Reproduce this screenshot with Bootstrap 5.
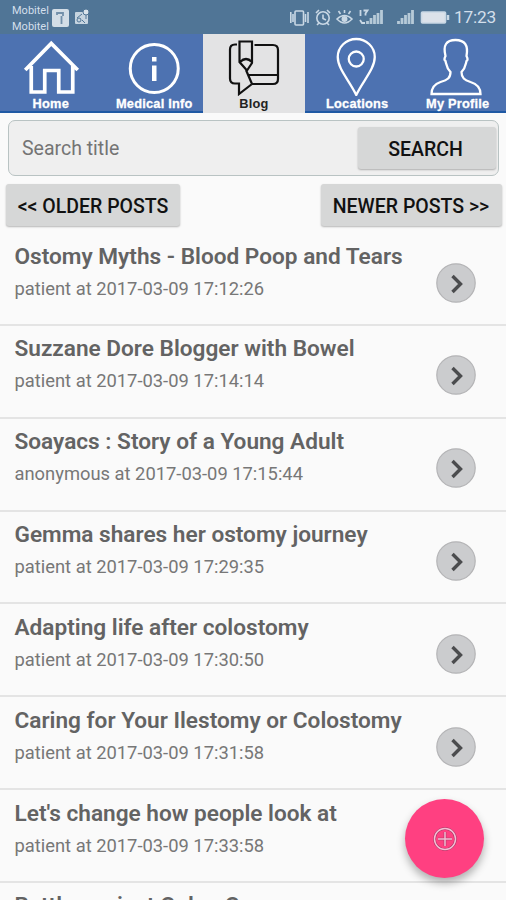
<!DOCTYPE html>
<html lang="en">
<head>
<meta charset="utf-8">
<meta name="viewport" content="width=device-width, initial-scale=1">
<title>Blog</title>
<link href="https://cdn.jsdelivr.net/npm/bootstrap@5.3.0/dist/css/bootstrap.min.css" rel="stylesheet">
<style>
body{font-family:Roboto,"Liberation Sans",sans-serif;background:#fafafa;height:900px;color:#666}
.screen{width:506px;height:900px}
.statusbar{height:34px;background:#507596;color:#d3dfeb}
.carrier{font-size:11px;line-height:15.5px;padding:3px 0 0 12px;width:51px;white-space:nowrap}
.clock{font-size:17.3px;line-height:35px;width:52px;letter-spacing:-.2px;white-space:nowrap}
.tabs{height:79px}
.tab{width:100.5px;height:79px;background:#4d72b1;color:#fff;border-bottom:2px solid #1f59a4;font:bold 12.8px/15px "Liberation Sans",Arial,sans-serif;letter-spacing:.22px;text-decoration:none}
.tab-wide{width:101.5px}
.tab.active{width:102px;background:#e3e3e4;color:#222;border-bottom-color:#e3e3e4}
.tab svg{height:62px;width:100px}
.tab span{-webkit-text-stroke:.3px;white-space:nowrap}
.tab.active span{-webkit-text-stroke:0}
.searchbox{height:56px;margin:7px 7px 0 8px;border:1.5px solid #b9c3c3;border-radius:7px;background:#efefef}
.searchbox .form-control{font-size:19.5px;color:#707070;padding:1px 0 0 13px}
.searchbox .form-control::placeholder{color:#747474}
.key{background:#d6d7d7;color:#111;font-weight:500;font-size:19.5px;line-height:41px;height:42px;border:0;border-radius:3px;padding:2px 0 0;box-shadow:0 1px 2px rgba(0,0,0,.28);white-space:nowrap}
.key-search{width:138px;margin-right:2px;padding-right:3px}
.key-older{width:174px;margin-left:2px}
.key-newer{width:181px;padding-right:1px}
.posts{padding-top:7px}
.post{height:92.85px;border-bottom:2px solid #e4e4e4;padding:5.5px 30px 0 14.5px}
.post h2{font-size:22.62px;line-height:28px;font-weight:600;color:#636363;white-space:nowrap}
.post p{font-size:18.35px;line-height:24px;color:#777;margin-top:2px;white-space:nowrap}
.go{width:40px;height:40px}
.fab{left:405px;top:799px;width:79px;height:79px;background:#ff4081;box-shadow:0 5px 9px rgba(0,0,0,.3)}
</style>
</head>
<body>
<svg class="d-none"><symbol id="chevron" viewBox="0 0 40 40"><circle cx="20" cy="20" r="19.2" fill="#cbccce" stroke="#b4b4b6" stroke-width="1.2"/><path d="M16.5 13 24.5 21 16.5 29" fill="none" stroke="#4b4c4e" stroke-width="3.4"/></symbol></svg>
<div class="screen position-relative overflow-hidden">
<header class="statusbar d-flex align-items-start">
  <div class="carrier">Mobitel<br>Mobitel</div>
  <svg width="40" height="34" viewBox="51 0 40 34"><rect x="52" y="9" width="17" height="18" rx="2" fill="#d3dde6"/><path d="M57 15v-2h6v3M61.500 16v8" fill="none" stroke="#7390aa" stroke-width="1.800"/><rect x="75" y="12" width="13" height="12" rx="1" fill="#c6d4e0"/><circle cx="86" cy="12" r="3" fill="#d9e3eb" stroke="#507596"/><path d="M86 15v4M82 14l-5 4m8 5-3-3" stroke="#507596" fill="none"/><circle cx="79" cy="20" r="2" fill="none" stroke="#507596"/></svg>
  <svg class="ms-auto" width="164" height="34" viewBox="290 0 164 34" fill="none" stroke="#c9d8e5" stroke-width="1.600"><rect x="295" y="11" width="8.500" height="14" rx="1"/><path d="M290.800 12v11M293 14v8M305.500 14v8M308 12v11"/><circle cx="323" cy="18" r="6.200"/><path d="M323 14.500v4l3 1.500M316 13l3-3m11 3-3-3M317 25l2-2m10 2-2-2"/><path d="M337 19q7.500-7 15 0-7.500 8-15 0zM344.500 13v-3m-4 4-2-3m10 3 2-3"/><circle cx="344.500" cy="19" r="2.200" fill="#c9d8e5"/><path d="M360.500 10v6m3-5.500h4l-2 3v2M360 20l2 3h3" stroke-width="1.800"/><path d="M367.500 24v-3m3.500 3v-6m3.500 6v-9m3.500 9V13m3.500 11V10M398.500 24v-3m3.500 3v-6m3.500 6v-9m3.500 9V13m3.500 11V10" stroke="#b6cad8" stroke-width="2.800"/><rect x="421.500" y="12" width="24" height="11" rx="1" fill="#dce2ea"/><path d="M448 15v5" stroke-width="2.500"/></svg>
  <div class="clock">17:23</div>
</header>
<nav class="tabs d-flex">
  <a class="tab tab-wide d-flex flex-column align-items-center" href="#"><svg viewBox="0.750 34 100 62" fill="none" stroke="#fff" stroke-width="3.700"><path d="M25 70 51 43.500 77.500 70M31 66v26h13.500V70.500h14V92h14V66"/></svg><span>Home</span></a>
  <a class="tab tab-wide d-flex flex-column align-items-center" href="#"><svg viewBox="102.250 34 100 62" fill="none" stroke="#fff" stroke-width="3"><circle cx="154.500" cy="68.500" r="24"/><path d="M154.500 57v4.500M154.500 65.500V81" stroke-width="4.500"/></svg><span class="ms-1">Medical Info</span></a>
  <a class="tab active d-flex flex-column align-items-center" href="#"><svg viewBox="204 34 100 62" fill="none" stroke="#111" stroke-width="2.200"><path d="M237 44.500h-2q-5 0-5 5v29q0 5 5 5h4v10.500L252 84M239.500 41.500H252V63l-5 7.500-7.500-8.500zM240 62q6-6 12 0M246 70l6 14M254.500 45H273q5 0 5 5v29q0 5-5 5h-21M249 75h29"/></svg><span>Blog</span></a>
  <a class="tab d-flex flex-column align-items-center" href="#"><svg viewBox="305.250 34 100 62" fill="none" stroke="#fff" stroke-width="2.300"><path d="M356.500 95C350 81 338 69 338 57a18.500 18 0 0 1 37 0c0 12-12 24-18.500 38z"/><circle cx="356.500" cy="59" r="7.500"/></svg><span class="ps-1">Locations</span></a>
  <a class="tab d-flex flex-column align-items-center" href="#"><svg viewBox="406.500 34 100 62" fill="none" stroke="#fff" stroke-width="2.300"><path d="M432 94q0-9 9-12c7-2 10-4 10-10-4-4-4-7-5-11q-2-1 0-5-4-16 10-16t11 16q2 4 0 5c-1 4-1 7-5 11 0 6 3 8 9 10q10 3 10 12z"/></svg><span class="ps-1">My Profile</span></a>
</nav>
<main>
  <form class="searchbox d-flex align-items-center"><input class="form-control border-0 bg-transparent shadow-none" placeholder="Search title" aria-label="Search title"><button type="button" class="key key-search flex-shrink-0">SEARCH</button></form>
  <div class="d-flex justify-content-between pt-2 px-1"><button class="key key-older">&lt;&lt; OLDER POSTS</button><button class="key key-newer">NEWER POSTS &gt;&gt;</button></div>
  <section class="posts">
    <article class="post d-flex justify-content-between align-items-start"><div><h2 class="mb-0 pt-1">Ostomy Myths - Blood Poop and Tears</h2><p class="mb-0 pt-1">patient at 2017-03-09 17:12:26</p></div><svg class="go mt-4"><use href="#chevron"/></svg></article>
    <article class="post d-flex justify-content-between align-items-start"><div><h2 class="mb-0 pt-1">Suzzane Dore Blogger with Bowel</h2><p class="mb-0 pt-1">patient at 2017-03-09 17:14:14</p></div><svg class="go mt-4"><use href="#chevron"/></svg></article>
    <article class="post d-flex justify-content-between align-items-start"><div><h2 class="mb-0 pt-1">Soayacs : Story of a Young Adult</h2><p class="mb-0 pt-1">anonymous at 2017-03-09 17:15:44</p></div><svg class="go mt-4"><use href="#chevron"/></svg></article>
    <article class="post d-flex justify-content-between align-items-start"><div><h2 class="mb-0 pt-1">Gemma shares her ostomy journey</h2><p class="mb-0 pt-1">patient at 2017-03-09 17:29:35</p></div><svg class="go mt-4"><use href="#chevron"/></svg></article>
    <article class="post d-flex justify-content-between align-items-start"><div><h2 class="mb-0 pt-1">Adapting life after colostomy</h2><p class="mb-0 pt-1">patient at 2017-03-09 17:30:50</p></div><svg class="go mt-4"><use href="#chevron"/></svg></article>
    <article class="post d-flex justify-content-between align-items-start"><div><h2 class="mb-0 pt-1">Caring for Your Ilestomy or Colostomy</h2><p class="mb-0 pt-1">patient at 2017-03-09 17:31:58</p></div><svg class="go mt-4"><use href="#chevron"/></svg></article>
    <article class="post d-flex justify-content-between align-items-start"><div><h2 class="mb-0 pt-1">Let's change how people look at</h2><p class="mb-0 pt-1">patient at 2017-03-09 17:33:58</p></div></article>
    <article class="post"><h2 class="mb-0 pt-1">Battle against Colon Cancer</h2></article>
  </section>
</main>
<button class="fab position-absolute rounded-circle border-0 p-0 d-flex align-items-center justify-content-center" aria-label="Add post"><svg width="26" height="26" viewBox="0 0 26 26" fill="none"><g stroke="#a73866" stroke-width="2.600"><circle cx="13" cy="13" r="10.500"/><path d="M13 6v14M6 13h14"/></g><g stroke="#f6bdd3" stroke-width="1.500"><circle cx="13" cy="13" r="10.500"/><path d="M13 6v14M6 13h14"/></g></svg></button>
</div>
<script src="https://cdn.jsdelivr.net/npm/bootstrap@5.3.0/dist/js/bootstrap.bundle.min.js"></script>
</body>
</html>
